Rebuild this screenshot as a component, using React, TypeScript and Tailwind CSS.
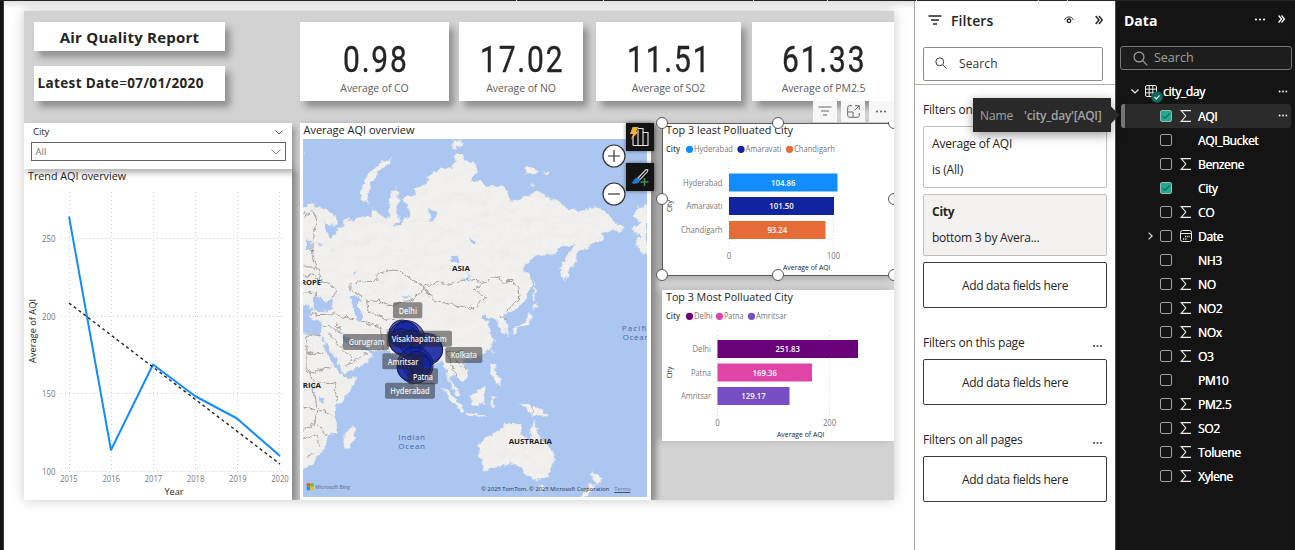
import React from "react";

/* ---------- small shared pieces ---------- */

type LabelProps = {
  x: number;
  y: number;
  w?: number;
  size: number;
  fill?: string;
  anchor?: "start" | "middle" | "end";
  weight?: number;
  spread?: boolean;
  children: string;
};

function Label({ x, y, w, size, fill = "#777777", anchor = "start", weight = 400, spread = false, children }: LabelProps) {
  return (
    <text x={x} y={y} fontSize={size} fill={fill} textAnchor={anchor} fontWeight={weight} textLength={w} lengthAdjust={spread ? "spacing" : "spacingAndGlyphs"}>
      {children}
    </text>
  );
}

function Dots({ className = "" }: { className?: string }) {
  return (
    <svg viewBox="0 0 12 3" className={`h-[3px] w-3 ${className}`} fill="currentColor">
      <circle cx="2" cy="1.5" r="1.1" />
      <circle cx="6" cy="1.5" r="1.1" />
      <circle cx="10" cy="1.5" r="1.1" />
    </svg>
  );
}

function DoubleChevron({ className = "" }: { className?: string }) {
  return (
    <svg viewBox="0 0 8 10" className={`h-[10px] w-2 ${className}`} fill="none" stroke="currentColor" strokeWidth="1.5">
      <path d="M.7 1 4 5 .7 9M4 1l3.300 4L4 9" />
    </svg>
  );
}

function FilterGlyph({ className = "" }: { className?: string }) {
  return (
    <svg viewBox="0 0 14 10" className={`h-[10px] w-[14px] ${className}`} fill="none" stroke="currentColor">
      <path d="M.5 1h13M3 5h8M5 9h4" />
    </svg>
  );
}

function Magnifier({ className = "" }: { className?: string }) {
  return (
    <svg viewBox="0 0 14 14" className={className} fill="none" stroke="currentColor" strokeWidth="1.1">
      <circle cx="5.6" cy="5.6" r="4.6" />
      <path d="m9 9 4.4 4.4" />
    </svg>
  );
}

/* ---------- report page ---------- */

const cards = [
  { value: "0.98", label: "Average of CO", box: "w-[149px] mr-[10px]" },
  { value: "17.02", label: "Average of NO", box: "w-[124px] mr-[13px]" },
  { value: "11.51", label: "Average of SO2", box: "w-[145px] mr-[11px]" },
  { value: "61.33", label: "Average of PM2.5", box: "w-[143px]" },
];

function Card({ value, label, box }: { value: string; label: string; box: string }) {
  return (
    <div className={`flex h-[79px] shrink-0 flex-col items-center bg-white shadow-[5px_6px_7px_rgba(0,0,0,0.32)] ${box}`}>
      <div className="mt-[16px] h-[44px] origin-center scale-x-[0.82] pl-[2px] font-['Roboto',sans-serif] text-[36.5px] leading-[44px] tracking-[2.2px] text-[#252423] [-webkit-text-stroke:0.35px_#252423]">
        {value}
      </div>
      <div className="-mt-px text-[10.5px] leading-[15px] tracking-[-0.1px] whitespace-nowrap text-[#605e5c]">{label}</div>
    </div>
  );
}

function Slicer() {
  return (
    <div className="relative z-10 h-[46px] w-[268px] bg-white px-[7px] shadow-[3px_4px_6px_rgba(0,0,0,0.3)]">
      <div className="flex h-[19px] items-center justify-between pr-[2px] pl-[2px]">
        <span className="text-[9.5px] tracking-[-0.1px] text-[#252423]">City</span>
        <svg viewBox="0 0 8 5" className="h-[5px] w-2" fill="none" stroke="#555" strokeWidth="0.900"><path d="m.5.5 3.500 3.500L7.500.5" /></svg>
      </div>
      <div className="-ml-[0.5px] flex h-[19px] w-[255px] items-center justify-between border border-[#666] pt-px pr-[4px] pl-[4px]">
        <span className="text-[9.5px] text-[#777]">All</span>
        <svg viewBox="0 0 10 6" className="h-[6px] w-[10px]" fill="none" stroke="#777" strokeWidth="0.900"><path d="m.5.5 4.500 4.500L9.500.5" /></svg>
      </div>
    </div>
  );
}

const years = [2015, 2016, 2017, 2018, 2019, 2020];

function TrendChart() {
  return (
    <div className="flex h-[331px] w-[268px] flex-col bg-white shadow-[5px_2px_6px_rgba(0,0,0,0.35)]">
      <svg viewBox="24 169 268 331" className="h-[331px] w-[268px]">
        <Label x={28} y={180} w={98} size={11} fill="#252423">Trend AQI overview</Label>
        <g stroke="#cfcfcf" strokeDasharray="1 3">
          {years.map((y, i) => <path key={y} d={`M${69.5 + i * 42} 192V471`} />)}
          {[238.5, 316.5, 393.5, 471.5].map((y) => <path key={y} d={`M61 ${y}H284`} />)}
        </g>
        {[238.5, 316.5, 393.5, 471.5].map((y, i) => (
          <Label key={y} x={55.5} y={y + 3} w={13.500} size={8.3} anchor="end">{String(250 - i * 50)}</Label>
        ))}
        {years.map((y, i) => (
          <Label key={y} x={69 + i * 42.2} y={482} w={17.5} size={8.3} anchor="middle">{String(y)}</Label>
        ))}
        <Label x={174} y={495} w={19} size={9.5} fill="#252423" anchor="middle">Year</Label>
        <g transform="rotate(-90 36 331)">
          <Label x={36} y={331} w={64} size={9.500} fill="#252423" anchor="middle">Average of AQI</Label>
        </g>
        <path d="m69 216.500 42 233.5L153 364.5l42 31.5 42 22.5 43 37.500" fill="none" stroke="#118dff" strokeWidth="2" strokeLinejoin="round" />
        <path d="M69 303 280 464" fill="none" stroke="#222" strokeWidth="1.4" strokeDasharray="3 3" />
      </svg>
    </div>
  );
}

/* Land outlines, in map units (three per pixel). */
const land = [
  // Eurasia
  "M0 265 35 250 50 262 85 270 108 290 112 303 104 318 86 314 70 306 78 335 92 350 108 345 112 325 133 318 132 300 140 290 150 302 185 292 214 290 218 265 235 275 250 290 270 288 266 250 276 215 286 205 298 214 292 262 300 298 280 318 300 314 312 292 330 290 328 262 306 238 322 222 346 230 345 205 382 192 384 168 420 148 458 142 465 110 480 98 495 120 522 125 532 152 510 186 540 182 560 200 602 196 620 212 636 246 664 236 692 226 710 210 742 230 780 246 802 266 850 272 880 262 900 265 935 290 945 310 975 320 962 336 930 330 905 342 915 356 885 370 858 388 832 394 828 420 812 450 794 486 780 462 788 426 812 396 830 370 806 376 785 375 765 402 700 410 668 448 690 462 694 500 672 545 642 575 618 582 610 578 616 600 624 620 620 640 606 642 598 620 590 596 566 590 545 582 552 602 570 605 562 620 575 640 582 662 572 690 545 705 508 716 498 722 488 730 505 755 502 775 484 786 474 772 458 760 450 778 466 800 482 828 470 826 448 790 438 745 424 722 400 735 378 745 352 798 336 792 318 760 300 720 284 705 262 690 220 690 178 682 165 668 128 640 118 632 130 660 152 680 184 680 190 690 218 700 205 726 170 745 130 760 118 738 84 680 62 640 66 618 58 602 30 595 28 580 40 572 28 560 10 555 0 560Z",
  // Africa
  "M0 640 62 644 76 690 104 738 130 775 172 770 152 810 110 860 104 890 110 934 82 950 76 985 52 1010 30 1040 0 1048Z",
  // Australia
  "M535 975 560 952 598 932 615 912 640 905 665 914 658 940 690 956 702 900 714 940 736 970 760 995 765 1020 746 1066 715 1080 682 1070 666 1045 640 1030 600 1040 550 1052 542 1020Z",
  "M718 1098 738 1098 730 1112 720 1110Z",
  "M875 1052 905 1078 895 1096 878 1078Z",
  "M872 1092 886 1096 860 1131 842 1131Z",
  // Madagascar, Sri Lanka
  "M160 912 168 935 150 985 138 990 128 975 134 944Z",
  "M345 800 358 812 350 822Z",
  // Indonesia, Philippines, New Guinea
  "M428 804 445 810 492 868 484 878 450 840Z",
  "M492 876 560 888 562 894 500 886Z",
  "M510 830 540 808 558 800 556 848 530 858 512 850Z",
  "M572 828 596 830 578 838 582 862 572 860Z",
  "M652 852 690 852 722 868 748 896 720 886 696 888 680 866Z",
  "M574 728 586 732 584 756 604 780 606 800 588 788 574 752Z",
  "M576 686 582 690 578 702Z",
  // Japan, Sakhalin
  "M700 470 708 510 706 545 698 540 702 500Z",
  "M698 552 716 556 704 568 694 564Z",
  "M690 574 698 590 692 612 660 622 640 644 636 634 664 612Z",
  "M614 628 626 634 620 650Z",
  // Arctic islands and Alaska
  "M272 116 270 130 236 152 210 192 202 230 206 248 186 240 178 222 194 178 214 156 240 128Z",
  "M455 60 482 56 486 80 462 86Z",
  "M674 142 700 140 716 152 702 162 676 160Z",
  "M728 154 746 158 740 166Z",
  "M690 188 708 194 698 200Z",
  "M1041 255 1012 266 1000 290 1026 308 994 326 1020 348 1004 374 1041 408Z",
  "M10 90 14 96 10 100Z",
];

const water = [
  "M40 532 60 530 82 545 100 540 96 556 100 568 70 572 44 574 36 556Z",
  "M150 532 172 528 184 540 170 552 186 580 186 606 170 600 162 570Z",
  "M0 612 30 608 58 624 52 642 0 636Z",
  "M382 262 398 268 410 282 400 302 386 306 394 288Z",
  "M508 352 520 356 528 366 518 374Z",
  "M478 484 500 470 512 456 500 478Z",
  "M446 412 470 410 478 428 466 424Z",
  "M20 360 34 364 32 388 22 392Z",
  "M56 364 64 372 56 380Z",
  "M160 452 168 456 162 464Z",
  "M304 530 334 528 320 536Z",
  "M58 832 74 836 72 848 62 850Z",
  "M92 384 98 390 96 396Z",
];

const borders = [
  "M10 290 36 268 50 300 40 340 34 400 52 440 60 480 100 500 108 520 92 536",
  "M10 440 50 442M10 470 34 462 54 476M10 520 50 516 40 540",
  "M186 530 150 510 150 492 180 486 230 484 232 462 276 450 300 456 322 470 350 486 372 500 362 520 330 542 300 545 280 560 244 545 200 542 204 570 250 596",
  "M372 500 410 486 450 492 500 478 560 486 590 466 608 486 640 484 656 502 660 530 620 574",
  "M372 500 400 540 450 552 520 566 560 530 520 508 560 486",
  "M250 596 300 600 330 618 370 640 420 650 440 690 460 700 490 690",
  "M184 606 240 620 244 650 250 690M250 640 300 600M66 618 100 622 122 640M110 610 120 632",
  "M62 644 20 646 22 760 92 740M22 700 80 700M22 760 60 790 110 790 110 850M40 790 50 860 100 890M10 860 50 870 44 910 10 930M50 910 82 945M10 960 50 940 60 980M20 1010 40 1000",
  "M84 640 130 690 160 720 200 700M130 745 160 724M440 690 456 740 474 772M460 700 480 740 500 745",
  "M696 856V884M600 588 622 600M28 585 100 582 160 600",
];

const cityLabels: { text: string; x: number; y: number; w: number; h: number; tx: number; tw: number }[] = [
  { text: "Delhi", x: 279, y: 547, w: 88, h: 48, tx: 296, tw: 55 },
  { text: "Gurugram", x: 129, y: 642, w: 138, h: 48, tx: 146, tw: 108 },
  { text: "Visakhapatnam", x: 260, y: 632, w: 196, h: 48, tx: 275, tw: 165 },
  { text: "Kolkata", x: 436, y: 681, w: 111, h: 48, tx: 452, tw: 79 },
  { text: "Amritsar", x: 247, y: 700, w: 124, h: 48, tx: 263, tw: 92 },
  { text: "Patna", x: 323, y: 745, w: 91, h: 48, tx: 339, tw: 60 },
  { text: "Hyderabad", x: 255, y: 788, w: 150, h: 48, tx: 271, tw: 118 },
];

const bubbles = [
  [308, 642, 42], [320, 656, 54], [318, 645, 40], [305, 664, 38], [336, 668, 38],
  [380, 688, 48], [392, 690, 36], [345, 736, 54], [350, 736, 42], [330, 744, 38], [362, 738, 32],
];

function WorldMap() {
  return (
    <svg viewBox="9 57 1032 1074" className="block h-[358px] w-[344px]">
      <defs>
        <filter id="coast" x="0" y="0" width="100%" height="100%">
          <feTurbulence type="fractalNoise" baseFrequency="0.06" numOctaves="3" seed="4" result="n" />
          <feDisplacementMap in="SourceGraphic" in2="n" scale="20" xChannelSelector="R" yChannelSelector="G" />
        </filter>
        <filter id="relief" x="0" y="0" width="100%" height="100%">
          <feTurbulence type="fractalNoise" baseFrequency="0.02 0.03" numOctaves="4" seed="9" result="n" />
          <feDiffuseLighting in="n" surfaceScale="7" lightingColor="#ffffff" result="l">
            <feDistantLight azimuth="235" elevation="62" />
          </feDiffuseLighting>
          <feComposite in="l" in2="SourceAlpha" operator="in" />
        </filter>
      </defs>
      <rect x="9" y="57" width="1032" height="1074" fill="#abc6f1" />
      <g filter="url(#coast)">
        <g fill="#f1f0ed" stroke="#c5d3e8" strokeWidth="1.500">
          {land.map((d) => <path key={d} d={d} />)}
        </g>
        <g filter="url(#relief)" opacity="0.12">
          {land.slice(0, 3).map((d) => <path key={d} d={d} />)}
        </g>
        <g fill="none" stroke="#a19e9b" strokeWidth="3">
          {borders.map((d) => <path key={d} d={d} />)}
        </g>
        <g fill="#abc6f1">
          {water.map((d) => <path key={d} d={d} />)}
        </g>
      </g>
      <Label x={456} y={453} w={54} size={23} fill="#222" weight={700}>ASIA</Label>
      <Label x={-27} y={494} w={90} size={23} fill="#222" weight={700}>EUROPE</Label>
      <Label x={-21} y={803} w={84} size={23} fill="#222" weight={700}>AFRICA</Label>
      <Label x={626} y={971} w={130} size={23} fill="#222" weight={700}>AUSTRALIA</Label>
      <Label x={295} y={959} w={80} size={24} fill="#4568a8" spread>Indian</Label>
      <Label x={295} y={986} w={80} size={24} fill="#4568a8" spread>Ocean</Label>
      <Label x={965} y={632} w={89} size={24} fill="#4568a8" spread>Pacific</Label>
      <Label x={968} y={659} w={80} size={24} fill="#4568a8" spread>Ocean</Label>
      <g fill="#12239e" fillOpacity="0.66" stroke="#0c1450" strokeOpacity="0.85" strokeWidth="3">
        {bubbles.map(([x, y, r]) => <circle key={`${x}-${y}`} cx={x} cy={y} r={r} />)}
      </g>
      {cityLabels.map((l) => (
        <g key={l.text}>
          <rect x={l.x} y={l.y} width={l.w} height={l.h} rx="6" fill="#252423" fillOpacity="0.5" />
          <Label x={l.tx} y={l.y + 34} w={l.tw} size={24} fill="#f2f2f2" weight={600}>{l.text}</Label>
        </g>
      ))}
      <path d="M20 1090h10v10H20z" fill="#f25022" />
      <path d="M31 1090h10v10H31z" fill="#7fba00" />
      <path d="M20 1101h10v10H20z" fill="#00a4ef" />
      <path d="M31 1101h10v10H31z" fill="#ffb900" />
      <Label x={46} y={1108} w={104} size={18} fill="#707c92" weight={600}>Microsoft Bing</Label>
      <Label x={544} y={1113} w={384} size={18} fill="#2e3440" weight={500}>© 2025 TomTom, © 2025 Microsoft Corporation</Label>
      <g textDecoration="underline">
        <Label x={943} y={1113} w={48} size={18} fill="#6579ac">Terms</Label>
      </g>
    </svg>
  );
}

function MapCard() {
  return (
    <div className="relative h-[377px] w-[351px] shrink-0 bg-white pl-[3px] shadow-[5px_2px_6px_rgba(0,0,0,0.35)]">
      <svg viewBox="303 123 120 16" className="block h-4 w-[120px]">
        <Label x={303.500} y={134} w={111} size={11} fill="#252423">Average AQI overview</Label>
      </svg>
      <WorldMap />
      <div className="absolute top-[21px] left-[301.500px] flex flex-col gap-[14px]">
        {["M6 12h12M12 6v12", "M6 12h12"].map((d) => (
          <svg key={d} viewBox="0 0 24 24" className="size-6" fill="#fff" stroke="#333" strokeWidth="1.2">
            <circle cx="12" cy="12" r="11" />
            <path d={d} />
          </svg>
        ))}
      </div>
      <div className="absolute top-0 left-[326px] z-20 flex flex-col gap-[12px]">
        <div className="flex size-7 items-center justify-center bg-[#141414] shadow-[0_0_4px_rgba(0,0,0,0.5)]">
          <svg viewBox="0 0 28 28" className="size-7" fill="none">
            <path d="M7 22.500V13M7 22.500H12V6.500M12 5.500h5v17h-5M17 9.500h5v13h-5" stroke="#e8e8e8" strokeWidth="1.1" />
            <path d="M6.500 4h6L10 8.500h3L5 16.500 7 11H4Z" fill="#f0ae3c" />
          </svg>
        </div>
        <div className="flex size-7 items-center justify-center bg-[#141414] shadow-[0_0_4px_rgba(0,0,0,0.5)]">
          <svg viewBox="0 0 28 28" className="size-7" fill="none">
            <path d="m12 15 8-8.500 1.800.2-.3 1.800-7.700 8.300z" stroke="#d8d8d8" strokeWidth="1.1" />
            <path d="M5 19.500c3.500 0 2.500-5 6-4.800 3 .3 3.500 3.300 1.500 5-2 1.500-5.500 1.400-7.500-.2Z" fill="#1c7fd6" />
            <path d="M18.500 15v8M14.500 19h8" stroke="#3f8a4d" strokeWidth="1.6" />
          </svg>
        </div>
      </div>
    </div>
  );
}

type Bar = { name: string; nameX: number; nameW: number; value: string; y: number; end: number; color: string };

function BarChart(props: {
  y0: number;
  title: string;
  titleW: number;
  legend: { text: string; x: number; w: number; color: string }[];
  bars: Bar[];
  zero: number;
  tick: { x: number; text: string };
  axis: { x: number; y: number };
  height: number;
}) {
  const { y0, title, titleW, legend, bars, zero, tick, axis, height } = props;
  return (
    <svg viewBox={`662 ${y0} 232 ${height}`} width={232} height={height} className="block">
      <Label x={666} y={y0 + 11} w={titleW} size={11} fill="#252423">{title}</Label>
      <Label x={666} y={y0 + 29} w={14} size={8.300} fill="#444" weight={600}>City</Label>
      {legend.map((l) => (
        <g key={l.text}>
          <circle cx={l.x} cy={y0 + 26.300} r="3.600" fill={l.color} />
          <Label x={l.x + 4.500} y={y0 + 29} w={l.w} size={8.300}>{l.text}</Label>
        </g>
      ))}
      <g stroke="#d0d0d0" strokeDasharray="1 2.500">
        <path d={`M${zero} ${bars[0].y - 9}V${axis.y - 18}`} />
        <path d={`M${tick.x} ${bars[0].y - 9}V${axis.y - 18}`} />
      </g>
      {bars.map((b) => (
        <g key={b.name}>
          <rect x={zero} y={b.y} width={b.end - zero} height="18" fill={b.color} />
          <Label x={b.nameX} y={b.y + 12} w={b.nameW} size={8.300}>{b.name}</Label>
          <Label x={(zero + b.end) / 2} y={b.y + 12} w={b.value.length * 4.050 - (b.value.length === 5 ? 0.500 : 0)} size={8.300} fill="#fff" weight={600} anchor="middle">
            {b.value}
          </Label>
        </g>
      ))}
      <Label x={zero} y={axis.y - 11} w={4.500} size={8.300} anchor="middle">0</Label>
      <Label x={tick.x} y={axis.y - 11} w={13} size={8.300} anchor="middle">{tick.text}</Label>
      <Label x={axis.x} y={axis.y} w={47.500} size={7.300} fill="#252423">Average of AQI</Label>
      <g transform={`rotate(-90 672 ${bars[1].y + 9})`}>
        <Label x={672} y={bars[1].y + 9} w={12} size={7.300} fill="#252423" anchor="middle">City</Label>
      </g>
    </svg>
  );
}

const handles = [
  "-left-[6px] -top-[6px]", "left-[110px] -top-[6px]", "left-[226px] -top-[6px]",
  "-left-[6px] top-[70px]", "left-[226px] top-[70px]",
  "-left-[6px] top-[146px]", "left-[110px] top-[146px]", "left-[226px] top-[146px]",
];

function SelectedChart() {
  return (
    <div className="relative z-10 h-[153px] w-[233px] bg-white shadow-[-5px_2px_7px_rgba(0,0,0,0.22)]">
      <BarChart
        y0={123} height={152} title="Top 3 least Polluated City" titleW={127}
        legend={[
          { text: "Hyderabad", x: 689.500, w: 39, color: "#118dff" },
          { text: "Amaravati", x: 741, w: 36, color: "#12239e" },
          { text: "Chandigarh", x: 789.500, w: 41, color: "#e66c37" },
        ]}
        bars={[
          { name: "Hyderabad", nameX: 683, nameW: 39.500, value: "104.86", y: 173.500, end: 837.500, color: "#118dff" },
          { name: "Amaravati", nameX: 686.500, nameW: 36, value: "101.50", y: 197, end: 834, color: "#12239e" },
          { name: "Chandigarh", nameX: 681, nameW: 41.500, value: "93.24", y: 221, end: 825.500, color: "#e66c37" },
        ]}
        zero={729} tick={{ x: 833.500, text: "100" }} axis={{ x: 783, y: 270 }}
      />
      <div className="pointer-events-none absolute inset-0 border border-[#5a5a5a]" />
      {handles.map((h) => (
        <div key={h} className={`absolute size-3 rounded-full border border-[#555] bg-white ${h}`} />
      ))}
      <div className="absolute -top-[22px] left-[151px] flex gap-[4px] text-[#666]">
        <div className="flex h-[21px] w-6 items-center justify-center bg-[#f7f7f7] pb-px"><FilterGlyph className="w-3" /></div>
        <div className="flex h-[21px] w-6 items-center justify-center bg-[#f7f7f7]">
          <svg viewBox="0 0 13 13" className="size-[13px]" fill="none" stroke="currentColor">
            <path d="M5 .7H2.500A1.800 1.800 0 0 0 .7 2.500v8a1.800 1.800 0 0 0 1.800 1.800h8a1.800 1.800 0 0 0 1.800-1.800V8M8 .7h4.300V5M12 1 7.500 5.500M.7 7h5.300v5.300" />
          </svg>
        </div>
        <div className="flex h-[21px] w-[26px] items-center justify-center bg-[#f7f7f7] pr-[2px] pb-px"><Dots /></div>
      </div>
    </div>
  );
}

function ReportPage() {
  return (
    <div className="h-[489px] w-[870px] shrink-0 shadow-[0_0_12px_rgba(0,0,0,0.22)]">
      <div className="flex h-[489px] w-[870px] flex-col overflow-hidden bg-[#d2d2d2]">
        <div className="flex h-[112px] shrink-0 pt-[11px] pl-[10px]">
          <div className="mr-[75px] flex w-[191px] shrink-0 flex-col gap-[15px]">
            <div className="flex h-[29px] items-center justify-center bg-white pt-[2px] text-[15px] font-bold text-[#252423] shadow-[5px_6px_7px_rgba(0,0,0,0.32)]">
              <span className="tracking-[0.23px] whitespace-nowrap">Air Quality Report</span>
            </div>
            <div className="flex h-[35px] items-center bg-white pl-[3.500px] text-[13.5px] font-bold text-[#252423] shadow-[5px_6px_7px_rgba(0,0,0,0.32)]">
              <span className="tracking-[0.36px] whitespace-nowrap">Latest Date<span className="font-normal">=</span>07/01/2020</span>
            </div>
          </div>
          {cards.map((c) => <Card key={c.label} {...c} />)}
        </div>
        <div className="flex h-[377px]">
          <div className="mr-[8px] flex w-[268px] shrink-0 flex-col">
            <Slicer />
            <TrendChart />
          </div>
          <MapCard />
          <div className="ml-[11px] flex w-[232px] shrink-0 flex-col gap-[14px]">
            <SelectedChart />
            <div className="h-[151px] w-[232px] bg-white shadow-[-5px_0_7px_rgba(0,0,0,0.15)]">
              <BarChart
                y0={290} height={151} title="Top 3 Most Polluated City" titleW={127}
                legend={[
                  { text: "Delhi", x: 689.500, w: 18.500, color: "#6b007b" },
                  { text: "Patna", x: 719.500, w: 19.500, color: "#e044a7" },
                  { text: "Amritsar", x: 751.500, w: 30.500, color: "#744ec2" },
                ]}
                bars={[
                  { name: "Delhi", nameX: 692.500, nameW: 18.500, value: "251.83", y: 340, end: 858, color: "#6b007b" },
                  { name: "Patna", nameX: 691, nameW: 20, value: "169.36", y: 363.500, end: 812, color: "#e044a7" },
                  { name: "Amritsar", nameX: 681, nameW: 30, value: "129.17", y: 387, end: 789.500, color: "#744ec2" },
                ]}
                zero={717.500} tick={{ x: 829.500, text: "200" }} axis={{ x: 777, y: 437 }}
              />
            </div>
          </div>
        </div>
      </div>
    </div>
  );
}

/* ---------- filters pane ---------- */

function DropZone() {
  return (
    <div className="flex h-[46px] w-[184px] shrink-0 items-center justify-center rounded-[2px] border border-[#3b3a39] pt-[2px] text-[12px] tracking-[-0.3px] text-[#252423]">
      Add data fields here
    </div>
  );
}

function SectionHeading({ children }: { children: string }) {
  return (
    <div className="flex h-[20px] items-center justify-between pr-[13px] text-[12px] tracking-[-0.2px] whitespace-nowrap text-[#252423]">
      <span>{children}</span>
      <svg viewBox="0 0 9 2" className="mt-[5px] h-[2px] w-[9px]" fill="#6c6c6c"><path d="M0 0h2v2H0zM3.500 0h2v2h-2zM7 0h2v2H7z" /></svg>
    </div>
  );
}

function FiltersPane() {
  return (
    <div className="relative flex w-[201px] shrink-0 flex-col border-l border-[#a9a5a1] bg-white">
      <div className="flex h-[84px] shrink-0 flex-col border-b border-[#b3afab] pl-[8px]">
        <div className="flex h-[39px] items-center pl-[5px] text-[#252423]">
          <FilterGlyph className="mr-[9px] mb-[2px] w-[13px] stroke-[1.3]" />
          <span className="w-[109px] text-[14px] font-semibold tracking-[0.1px]">Filters</span>
          <svg viewBox="0 0 10 8" className="mr-[21px] mb-px ml-[4px] h-2 w-[10px] shrink-0" fill="none" stroke="currentColor">
            <path d="M.5 4C1.500 1.800 3 1 5 1s3.500.8 4.500 3" />
            <circle cx="5" cy="4.800" r="1.800" strokeWidth="1.300" />
          </svg>
          <DoubleChevron className="mb-px" />
        </div>
        <div className="mt-[7px] flex h-[34px] w-[180px] items-center rounded-[2px] border border-[#8f8c89] pl-[11px] text-[12px] tracking-[0.1px] text-[#333]">
          <Magnifier className="mr-[12px] mb-[2px] size-3" />
          Search
        </div>
      </div>
      <div className="flex flex-col pt-[15px] pl-[8px]">
        <SectionHeading>Filters on this visual</SectionHeading>
        <div className="mt-[6px] flex h-[62px] w-[184px] flex-col justify-center gap-[8px] rounded-[2px] border border-[#c2bfbc] pl-[8px] text-[12px] leading-[18px] tracking-[-0.2px] text-[#252423]">
          <span>Average of AQI</span>
          <span>is (All)</span>
        </div>
        <div className="mt-[6px] mb-[6px] flex h-[62px] w-[184px] flex-col justify-center gap-[8px] rounded-[2px] border border-[#c2bfbc] bg-[#f3f2f1] pl-[8px] text-[12px] leading-[18px] tracking-[-0.25px] text-[#252423]">
          <span className="font-bold">City</span>
          <span>bottom 3 by Avera...</span>
        </div>
        <DropZone />
        <div className="mt-[25px] mb-[6px]"><SectionHeading>Filters on this page</SectionHeading></div>
        <DropZone />
        <div className="mt-[25px] mb-[6px]"><SectionHeading>Filters on all pages</SectionHeading></div>
        <DropZone />
      </div>
      <div className="absolute top-[97px] left-[58px] z-30 flex h-[34px] w-[138px] items-center bg-[#292929] pt-[2px] pl-[7px] text-[12px] tracking-[-0.1px] whitespace-nowrap text-[#a3a3a3] shadow-[0_3px_10px_rgba(0,0,0,0.4)]">
        <span className="w-[44px]">Name</span>
        <span className="font-semibold tracking-[-0.25px]">'city_day'[AQI]</span>
        <div className="absolute top-[11px] -right-[6px] size-3 rotate-45 bg-[#292929]" />
      </div>
    </div>
  );
}

/* ---------- data pane ---------- */

type Field = { name: string; checked?: boolean; icon?: "sum" | "date"; active?: boolean };

const fields: Field[] = [
  { name: "AQI", checked: true, icon: "sum", active: true },
  { name: "AQI_Bucket" },
  { name: "Benzene", icon: "sum" },
  { name: "City", checked: true },
  { name: "CO", icon: "sum" },
  { name: "Date", icon: "date" },
  { name: "NH3" },
  { name: "NO", icon: "sum" },
  { name: "NO2", icon: "sum" },
  { name: "NOx", icon: "sum" },
  { name: "O3", icon: "sum" },
  { name: "PM10" },
  { name: "PM2.5", icon: "sum" },
  { name: "SO2", icon: "sum" },
  { name: "Toluene", icon: "sum" },
  { name: "Xylene", icon: "sum" },
];

function FieldRow({ name, checked, icon, active }: Field) {
  return (
    <div className={`flex h-6 w-[170px] items-center rounded-[3px] ${active ? "bg-[#2b2b2b]" : ""}`}>
      <div className={`h-6 w-1 rounded-l-[3px] ${active ? "bg-[#757575]" : ""}`} />
      <div className="flex w-[35px] justify-end pr-[7px]">
        {icon === "date" && (
          <svg viewBox="0 0 5 8" className="h-2 w-[5px]" fill="none" stroke="#ddd" strokeWidth="1.200"><path d="m.6.6 3.500 3.400L.6 7.400" /></svg>
        )}
      </div>
      <div className={`size-3 shrink-0 rounded-[2px] border ${checked ? "border-[#8fbdb3] bg-[#27a58c]" : "border-[#a3a3a3]"}`}>
        {checked && (
          <svg viewBox="0 0 10 10" className="size-[10px]" fill="none" stroke="#0d4f44"><path d="m1.500 5.200 2.300 2.300 4.800-5" /></svg>
        )}
      </div>
      <div className="ml-[8px] flex w-[18px] shrink-0">
        {icon === "sum" && (
          <svg viewBox="0 0 12 12" className="size-3" fill="none" stroke="#eee" strokeWidth="1.100"><path d="M11 .6H1.200L5.800 6l-4.600 5.400H11" /></svg>
        )}
        {icon === "date" && (
          <svg viewBox="0 0 12 12" className="size-3" fill="none" stroke="#eee"><rect x=".5" y=".5" width="11" height="11" rx="2" /><path d="M.5 3.500h11" /><path d="M5 6.500h5M3 9h4.500" strokeWidth="1.300" strokeDasharray="1.200 1" /></svg>
        )}
      </div>
      <span className="w-[80px] pt-[2px] text-[12px] tracking-[-0.35px] text-white [text-shadow:0.3px_0_0_#fff]">{name}</span>
      {active && <Dots className="h-[2.500px] w-[10px]" />}
    </div>
  );
}

function DataPane() {
  return (
    <div className="flex w-[180px] shrink-0 flex-col border-l border-[#4a4a4a] bg-[#141414] text-white">
      <div className="flex h-[39px] items-center pl-[8px]">
        <span className="w-[130px] text-[14px] font-bold tracking-[0px]">Data</span>
        <Dots className="mb-[3px]" />
        <DoubleChevron className="mb-[3px] ml-[12px] h-[9px] w-[7px]" />
      </div>
      <div className="mt-[6px] ml-[4px] flex h-[24px] w-[172px] items-center rounded-[3px] border border-[#777] bg-[#1d1d1d] pl-[12px] text-[12.500px] text-[#a0a0a0]">
        <Magnifier className="mr-[6px] size-[15px]" />
        Search
      </div>
      <div className="mt-[9px] flex h-6 items-center pl-[15px]">
        <svg viewBox="0 0 8 5" className="mr-[6px] h-[5px] w-2" fill="none" stroke="#eee" strokeWidth="1.200"><path d="m.5.5 3.500 3.500L7.500.5" /></svg>
        <div className="relative mr-[6px] size-3">
          <svg viewBox="0 0 12 12" className="size-3" fill="none" stroke="#eee"><rect x=".5" y=".5" width="11" height="11" rx="1.500" /><path d="M.5 4.200h11M.5 7.800h11M4.200.5v11M7.800.5v11" /></svg>
          <svg viewBox="0 0 12 12" className="absolute top-[6px] left-[6px] size-3"><circle cx="6" cy="6" r="5.800" fill="#11695b" /><path d="m3.500 6.200 1.800 1.800 3.200-3.500" fill="none" stroke="#fff" strokeWidth="1.200" /></svg>
        </div>
        <span className="w-[115px] pt-[2px] text-[12px] tracking-[-0.3px] [text-shadow:0.3px_0_0_#fff]">city_day</span>
        <Dots className="h-[2.500px] w-[10px]" />
      </div>
      <div className="flex flex-col pt-[0.500px] pl-[5px]">
        {fields.map((f) => <FieldRow key={f.name} {...f} />)}
      </div>
    </div>
  );
}

export default function App() {
  return (
    <div className="flex h-[550px] w-[1295px] flex-col overflow-hidden bg-white font-['Open_Sans','Noto_Sans',sans-serif]">
      <div className="flex h-px shrink-0 bg-[#252423]">
        {["ml-[516px]", "ml-[86px]", "ml-[149px]", "ml-[73px]", "ml-[88px]", "ml-[121px]", "ml-[28px]"].map((m) => (
          <div key={m} className={`h-px w-px bg-[#ddd] ${m}`} />
        ))}
      </div>
      <div className="flex h-[549px]">
        <div className="w-1 shrink-0 border-r border-[#3c3733] bg-[#141210]" />
        <div className="flex w-[910px] shrink-0 overflow-hidden bg-white bg-linear-to-b from-[#e4e2e2] to-white to-[8px] pt-[10px] pl-[20px]">
          <ReportPage />
        </div>
        <FiltersPane />
        <DataPane />
      </div>
    </div>
  );
}
